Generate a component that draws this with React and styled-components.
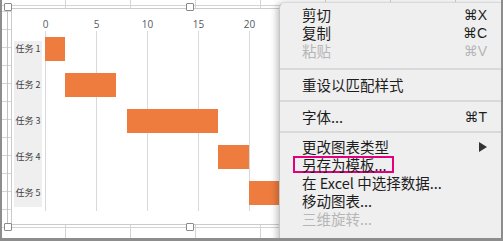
import React from 'react';
import styled, { createGlobalStyle } from 'styled-components';

const Global = createGlobalStyle`
  html, body { margin: 0; padding: 0; background: #fff; }
  body { width: 503px; height: 241px; overflow: hidden; }
`;

const Frame = styled.div`
  position: relative;
  width: 503px;
  height: 241px;
  box-sizing: border-box;
  border-style: solid;
  border-color: #8d8d8d;
  border-width: 0 2px 3px 2px;
  overflow: hidden;
  background-color: #fff;
  background-image:
    linear-gradient(#d4d4d4, #d4d4d4),
    repeating-linear-gradient(to right, transparent 0 63px, #d4d4d4 63px 64px, transparent 64px 65px),
    repeating-linear-gradient(to bottom, transparent 0 11px, #d4d4d4 11px 12px, transparent 12px 18px);
  background-size: 100% 1px, auto, auto;
  background-position: 0 5px, 0 0, 0 0;
  background-repeat: no-repeat, repeat, repeat;
`;

const SelectionFrame = styled.div`
  position: absolute;
  left: 5px;
  top: 7px;
  width: 365px;
  height: 220px;
  box-sizing: border-box;
  border-left: 1px solid #c2c2c2;
  padding: 1px 0 2px 3px;
  display: flex;
`;

const Handle = styled.div`
  position: absolute;
  width: 8px;
  height: 8px;
  box-sizing: border-box;
  background: #fff;
  border: 1px solid #8a8a8a;
  border-radius: 1px;
  z-index: 2;
  left: ${p => (p.$x === 'mid' ? '178px' : '-4px')};
  ${p => (p.$y === 'bottom' ? 'bottom: -4px;' : 'top: -4px;')}
`;

const ChartArea = styled.div`
  flex: 1;
  box-sizing: border-box;
  border: 1px solid #cbcbcb;
  background: #fff;
  padding: 9px 0 0 2px;
  overflow: hidden;
`;

const ChartGrid = styled.div`
  display: grid;
  grid-template-columns: 28px 316px;
  grid-template-rows: 12px 180px;
  column-gap: 3px;
  row-gap: 1px;
`;

const AxisRow = styled.div`
  grid-column: 2;
  grid-row: 1;
  display: flex;
  margin-left: -25px;
`;

const Tick = styled.div`
  flex: 0 0 51px;
  text-align: center;
  font: 10px/12px "Open Sans", "Liberation Sans", sans-serif;
  color: #555a63;
`;

const LabelCol = styled.div`
  grid-column: 1;
  grid-row: 2;
  display: flex;
  flex-direction: column;
  background: linear-gradient(#efefef, #efefef) 0 10px / 100% 166px no-repeat;
`;

const LabelCell = styled.div`
  height: 36px;
  display: flex;
  align-items: center;
  justify-content: center;
  font: 9px/12px "Noto Sans CJK SC", sans-serif;
  color: #404040;
  white-space: nowrap;
`;

const Plot = styled.div`
  grid-column: 2;
  grid-row: 2;
  display: flex;
  flex-direction: column;
  background: repeating-linear-gradient(to right, #d9d9d9 0 1px, transparent 1px 51px);
`;

const BarRow = styled.div`
  height: 36px;
  display: flex;
  align-items: center;
`;

const Bar = styled.div`
  height: 24px;
  background: #ef7c3f;
`;

const Menu = styled.div`
  position: absolute;
  left: 277px;
  top: 2px;
  width: 226px;
  height: 245px;
  box-sizing: border-box;
  background: #efefef;
  border-left: 1px solid #c6c6c6;
  border-top: 1px solid #d9d9d9;
  border-radius: 6px 0 0 0;
  box-shadow: -2px 1px 7px rgba(0, 0, 0, 0.26);
  padding: 3px 18px 0 0;
  z-index: 5;
`;

const Item = styled.div`
  display: flex;
  align-items: center;
  justify-content: space-between;
  height: 18px;
  padding-left: 22px;
  font: 14.5px/18px "Noto Sans CJK SC", sans-serif;
  color: ${p => (p.$disabled ? '#b6b6b6' : '#1d1d1d')};
  white-space: nowrap;
`;

const Shortcut = styled.span`
  font: 14px/18px "Liberation Sans", "DejaVu Sans", sans-serif;
`;

const Highlight = styled.span`
  display: inline-block;
  position: relative;
  top: -1px;
  border: 2px solid #e3007f;
  line-height: 13px;
  padding: 0 5px 0 7px;
  margin-left: -9px;
`;

const Separator = styled.div`
  height: 2px;
  background: #d9d9d9;
  margin: ${p => p.$mt}px -18px ${p => p.$mb}px 0;
`;

const Arrow = () => (
  <svg width="8" height="10" viewBox="0 0 8 10">
    <polygon points="0,0 8,5 0,10" fill="#333" />
  </svg>
);

const tasks = [
  { name: '任务 1', start: 0, dur: 2 },
  { name: '任务 2', start: 2, dur: 5 },
  { name: '任务 3', start: 8, dur: 9 },
  { name: '任务 4', start: 17, dur: 3 },
  { name: '任务 5', start: 20, dur: 6 },
];
const ticks = [0, 5, 10, 15, 20, 25, 30];
const UNIT = 10.2;

const menu = [
  { label: '剪切', sc: '⌘X' },
  { label: '复制', sc: '⌘C' },
  { label: '粘贴', sc: '⌘V', disabled: true },
  { sep: [8, 6] },
  { label: '重设以匹配样式' },
  { sep: [6, 6] },
  { label: '字体...', sc: '⌘T' },
  { sep: [5, 5] },
  { label: '更改图表类型', submenu: true },
  { label: '另存为模板...', highlight: true },
  { label: '在 Excel 中选择数据...' },
  { label: '移动图表...' },
  { label: '三维旋转...', disabled: true },
];

export default function App() {
  return (
    <>
      <Global />
      <Frame>
        <SelectionFrame>
          <Handle $x="left" $y="top" />
          <Handle $x="mid" $y="top" />
          <Handle $x="left" $y="bottom" />
          <Handle $x="mid" $y="bottom" />
          <ChartArea>
            <ChartGrid>
              <AxisRow>
                {ticks.map(t => (
                  <Tick key={t}>{t}</Tick>
                ))}
              </AxisRow>
              <LabelCol>
                {tasks.map(t => (
                  <LabelCell key={t.name}>{t.name}</LabelCell>
                ))}
              </LabelCol>
              <Plot>
                {tasks.map(t => (
                  <BarRow key={t.name}>
                    <Bar style={{ marginLeft: t.start * UNIT, width: t.dur * UNIT }} />
                  </BarRow>
                ))}
              </Plot>
            </ChartGrid>
          </ChartArea>
        </SelectionFrame>
        <Menu>
          {menu.map((m, i) =>
            m.sep ? (
              <Separator key={i} $mt={m.sep[0]} $mb={m.sep[1]} />
            ) : (
              <Item key={i} $disabled={m.disabled}>
                {m.highlight ? <Highlight>{m.label}</Highlight> : <span>{m.label}</span>}
                {m.sc && <Shortcut>{m.sc}</Shortcut>}
                {m.submenu && <Arrow />}
              </Item>
            )
          )}
        </Menu>
      </Frame>
    </>
  );
}
